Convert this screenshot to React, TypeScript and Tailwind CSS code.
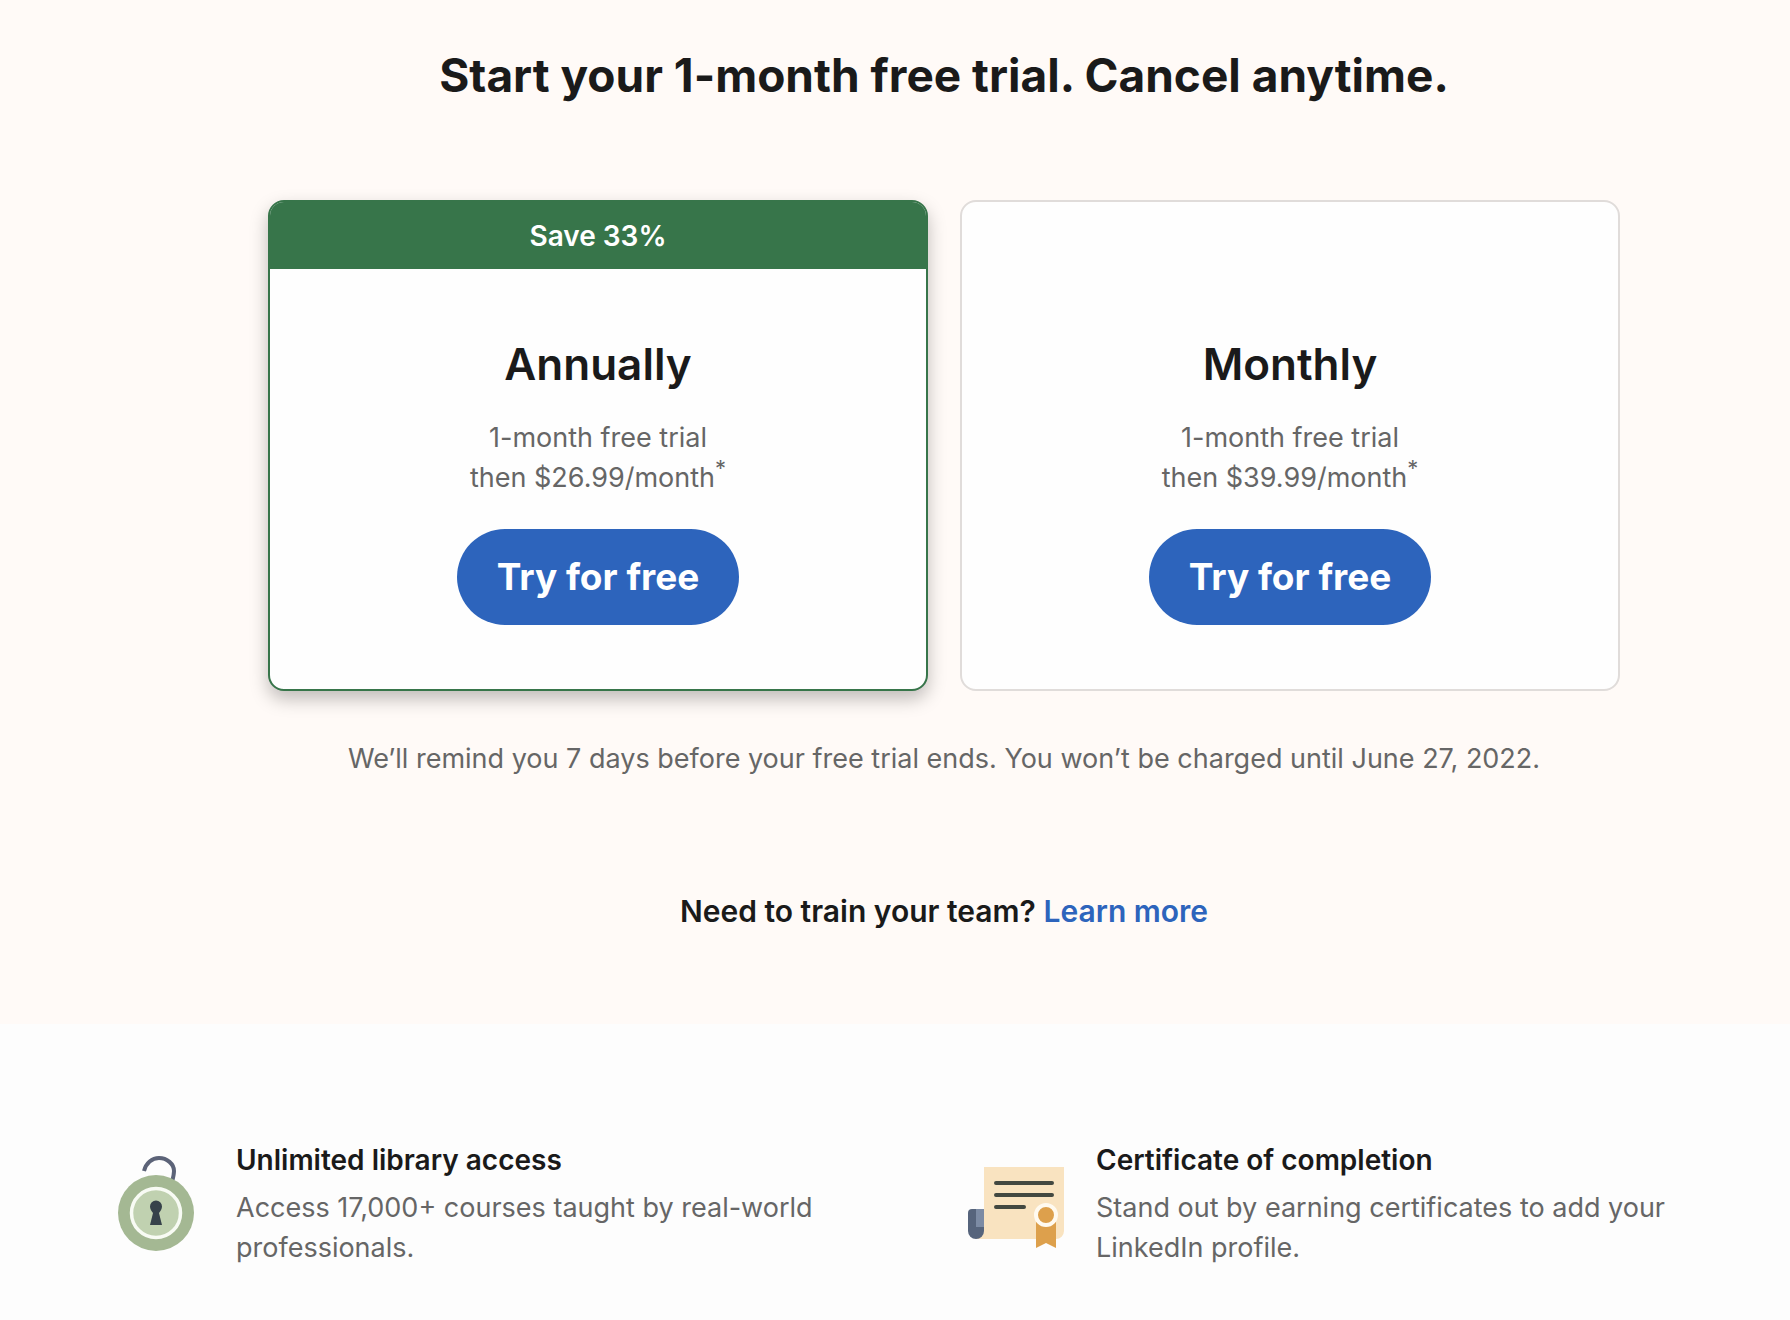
import type { ReactNode } from "react";

const plans = [
    { name: "Annually", price: "$26.99", badge: "Save 33%" },
    { name: "Monthly", price: "$39.99", badge: "" },
];

function LockIcon() {
    return (
        <svg className="h-24 w-24 shrink-0" viewBox="0 0 96 96" fill="none" aria-hidden="true">
            <path d="M36 15C38 7 44 2 51 2C59 2 66 8 66 15C66 18 65.500 20 64.500 24" stroke="#5c6378" strokeWidth="4" />
            <circle cx="48" cy="57" r="38" fill="#a4b893" />
            <circle cx="48" cy="57" r="24.500" fill="#c0d1b0" stroke="#f8fbf4" strokeWidth="3.500" />
            <path d="M48 44.500a6 6 0 0 1 6 6c0 2.500-1.500 4.500-3 6.500L54 69H42l3-12c-1.500-2-3-4-3-6.500a6 6 0 0 1 6-6Z" fill="#36424a" />
        </svg>
    );
}

function CertificateIcon() {
    return (
        <svg className="h-24 w-24 shrink-0" viewBox="0 0 96 96" fill="none" aria-hidden="true">
            <path d="M16 11H96V75a8 8 0 0 1-8 8H8L16 75Z" fill="#f9e3c0" />
            <path d="M4 53H16V75a8 8 0 0 1-16 0V57a4 4 0 0 1 4-4Z" fill="#56647c" />
            <path d="M8 53H16V71H8Z" fill="#7c8ba4" />
            <path d="M28 27H84M28 39H84M28 51H56" stroke="#434840" strokeWidth="4" strokeLinecap="round" />
            <path d="M68 66H88V92L78 87L68 92Z" fill="#dda04c" />
            <circle cx="78" cy="59" r="10" fill="#dda04c" stroke="#fffaf0" strokeWidth="4" />
        </svg>
    );
}

function PlanCard({ name, price, badge }: { name: string; price: string; badge: string }) {
    return (
        <section
            className={
                badge
                    ? "flex flex-1 flex-col overflow-hidden rounded-2xl border-2 border-[#37754a] bg-[#fefefe] shadow-[0_8px_18px_rgba(0,0,0,0.25)]"
                    : "flex flex-1 flex-col overflow-hidden rounded-2xl border-2 border-[#e0dcda] bg-[#fefefe]"
            }
        >
            <div className={badge ? "h-[67px] bg-[#37754a] pt-3.5 text-center text-[28px] leading-10 font-semibold text-white" : "h-[67px]"}>
                {badge}
            </div>
            <div className="flex flex-col items-center pt-[63px] pb-16">
                <h2 className="text-[44px] leading-[64px] font-semibold text-[#1a1a1a]">{name}</h2>
                <p className="mt-[22px] text-center text-[27px] leading-10 text-[#666]">
                    1-month free trial
                    <br />
                    then {price}/month<sup className="text-[22px]">*</sup>
                </p>
                <button type="button" className="mt-[31px] h-24 rounded-full bg-[#2d64bc] px-10 text-[37px] font-bold text-white">
                    Try for free
                </button>
            </div>
        </section>
    );
}

function Feature({ icon, title, children }: { icon: ReactNode; title: string; children: ReactNode }) {
    return (
        <div className="flex flex-1 items-center gap-8 pr-8">
            {icon}
            <div className="flex-1 text-[27px] leading-10">
                <h3 className="mb-2 text-[28px] leading-10 font-semibold text-[#1a1a1a]">{title}</h3>
                <p className="text-[#666]">{children}</p>
            </div>
        </div>
    );
}

export default function App() {
    return (
        <main className="min-h-screen bg-[#fdfdfd] font-['Inter',sans-serif]">
            {/* pricing */}
            <div className="flex flex-col items-center bg-[#fffaf7] pt-[43px] pb-[93px] pl-[98px]">
                <h1 className="text-[46px] leading-[64px] font-bold text-[#1a1a1a]">
                    Start your <strong className="font-bold">1-month free trial</strong>. Cancel anytime.
                </h1>
                <div className="mt-[93px] flex w-full max-w-[1352px] gap-8">
                    {plans.map((plan) => (
                        <PlanCard key={plan.name} {...plan} />
                    ))}
                </div>
                <p className="mt-12 text-[27px] leading-10 text-[#666]">
                    We’ll remind you 7 days before your free trial ends. You won’t be charged until June 27, 2022.
                </p>
                <p className="mt-28 text-[30px] leading-10 font-semibold text-[#1a1a1a]">
                    Need to train your team?{" "}
                    <a href="#team" className="text-[#2d64bc]">
                        Learn more
                    </a>
                </p>
            </div>

            {/* benefits */}
            <div className="flex gap-12 pt-29 pr-[10px] pb-10 pl-[108px]">
                <Feature icon={<LockIcon />} title="Unlimited library access">
                    Access 17,000+ courses taught by real-world professionals.
                </Feature>
                <Feature icon={<CertificateIcon />} title="Certificate of completion">
                    Stand out by earning certificates to add your LinkedIn profile.
                </Feature>
            </div>
        </main>
    );
}
